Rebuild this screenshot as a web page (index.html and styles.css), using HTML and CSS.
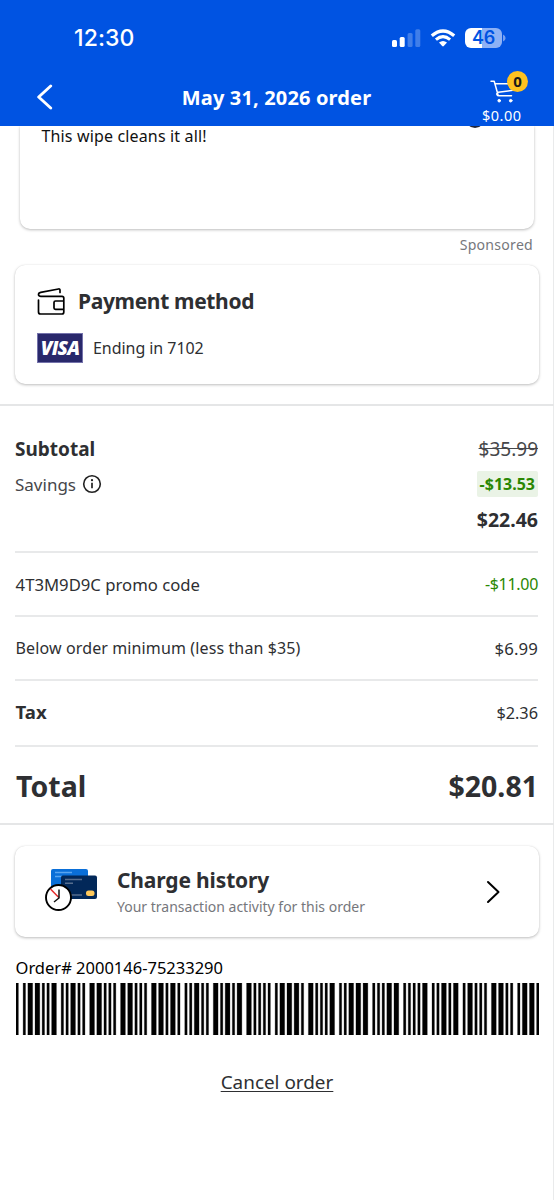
FILE: index.html
```html
<!DOCTYPE html>
<html lang="en">
<head>
<meta charset="utf-8">
<title>May 31, 2026 order</title>
<link rel="stylesheet" href="styles.css">
</head>
<body>
<div class="screen">
  <header class="header">
    <div class="status">
      <span class="clock">12:30</span>
      <div class="status-icons">
        <svg class="signal" width="29" height="18" viewBox="0 0 29 18" fill="#fff"><rect x="0" y="11" width="5" height="7" rx="1.5"/><rect x="7.7" y="8" width="5" height="10" rx="1.5"/><rect x="15.6" y="4" width="5" height="14" rx="1.5" opacity=".25"/><rect x="23.3" y="0.2" width="5" height="17.8" rx="1.5" opacity=".25"/></svg>
        <svg class="wifi" width="26" height="18" viewBox="0 0 26 18"><path d="M1.800 6.700Q13-2.700 24.200 6.700" fill="none" stroke="#fff" stroke-width="3.300"/><path d="M5.900 10.600Q13 4.700 20.100 10.600" fill="none" stroke="#fff" stroke-width="3.100"/><path d="M9 13.600Q13 10.400 17 13.600L13.800 17Q13 17.800 12.200 17Z" fill="#fff"/></svg>
        <div class="battery"><span>46</span></div>
        <svg class="battery-tip" width="3" height="8" viewBox="0 0 3 8"><path d="M0 .5Q2.600 1.500 2.600 4Q2.600 6.500 0 7.500Z" fill="#76a0f1"/></svg>
      </div>
    </div>
    <div class="nav">
      <svg class="back" width="18" height="26" viewBox="0 0 18 26"><path d="M14.700 2L2.700 13L14.700 24" fill="none" stroke="#fff" stroke-width="2.900" stroke-linecap="round" stroke-linejoin="round"/></svg>
      <h1 class="title">May 31, 2026 order</h1>
      <div class="cart">
        <svg width="30" height="24" viewBox="0 0 30 24" fill="none" stroke="#fff" stroke-width="1.500" stroke-linecap="round" stroke-linejoin="round"><path d="M1 1.300H4.200L8 14.700M5 3.800H24L22.700 10.300L8.300 12.300Q6.300 13 7 14.700Q7.400 15.800 9 15.800H21.500"/><circle cx="9.200" cy="20.700" r="1.300" fill="#fff" stroke-width="1"/><circle cx="20.700" cy="20.700" r="1.300" fill="#fff" stroke-width="1"/></svg>
        <span class="badge">0</span>
        <span class="cart-total">$0.00</span>
      </div>
    </div>
  </header>

  <main class="content">
    <section class="card ad"><span class="ad-mark"></span><p>This wipe cleans it all!</p></section>
    <div class="sponsored"><span>Sponsored</span></div>
    <section class="card payment">
      <div class="payment-head">
        <svg width="29" height="29" viewBox="0 0 29 29" fill="none" stroke="#000" stroke-width="1.700" stroke-linejoin="round" stroke-linecap="round"><path d="M1.500 13V25Q1.500 27 3.500 27H25Q26.800 27 26.800 25V11Q26.800 9.300 25 9.300H4Q1.500 9.300 1.500 7.600Q1.500 5.800 3.700 5.300L21.500 2Q23 1.700 23 3.200V5.500M26.800 14H18.500Q17 14 17 15.500V21Q17 22.300 18.500 22.300H26.800"/></svg>
        <h2><span>Payment method</span></h2>
      </div>
      <div class="payment-row"><b class="visa"><span>VISA</span></b><span class="ending">Ending in 7102</span></div>
    </section>

    <section class="summary">
      <div class="group subtotal">
        <div class="row"><strong class="sub-label">Subtotal</strong><s>$35.99</s></div>
        <div class="row"><span class="savings"><span class="savings-label">Savings</span><svg width="20" height="20" viewBox="0 0 20 20"><circle cx="10" cy="10" r="8.300" fill="none" stroke="#222" stroke-width="1.600"/><circle cx="10" cy="6.200" r="1.150" fill="#222"/><path d="M10 8.800V14.300" fill="none" stroke="#222" stroke-width="1.700"/></svg></span><strong class="discount">-$13.53</strong></div>
        <div class="row"><span></span><strong class="net">$22.46</strong></div>
      </div>
      <div class="group line promo"><span>4T3M9D9C promo code</span><span class="green">-$11.00</span></div>
      <div class="group line minimum"><span>Below order minimum (less than $35)</span><span class="fee">$6.99</span></div>
      <div class="group line tax"><strong>Tax</strong><span class="tax-amount">$2.36</span></div>
      <div class="total"><strong class="total-label">Total</strong><strong class="total-amount">$20.81</strong></div>
    </section>

    <section class="card charge">
      <svg class="charge-icon" width="54" height="44" viewBox="0 0 54 44"><rect x="6" y="1" width="37" height="23" rx="2" fill="#0a6fd8"/><path d="M10 4.500H27M10 8.500H17" stroke="#59a5f0" stroke-width="1.500"/><rect x="16" y="7.500" width="36" height="23.500" rx="2" fill="#022859"/><path d="M20 11.500H37M20 15.300H28M25 27H37" stroke="#576e8e" stroke-width="1.500"/><rect x="41" y="22.500" width="8.500" height="5.500" rx="2.500" fill="#ffc95c"/><circle cx="13.500" cy="29.500" r="12.500" fill="#fff" stroke="#000" stroke-width="1.900"/><path d="M5.500 21L13.800 29.500" stroke="#e32c2c" stroke-width="1.500"/><path d="M14 21.500V30L9 34" fill="none" stroke="#111" stroke-width="1.500"/></svg>
      <div class="charge-text"><h2><span>Charge history</span></h2><p>Your transaction activity for this order</p></div>
      <svg class="chevron" width="16" height="26" viewBox="0 0 16 26"><path d="M3 3L13.500 13L3 23" fill="none" stroke="#000" stroke-width="2" stroke-linecap="round" stroke-linejoin="round"/></svg>
    </section>
    <p class="order-number"><span>Order# 2000146-75233290</span></p>
    <svg class="barcode" viewBox="0 0 220 52" preserveAspectRatio="none" aria-label="Order barcode"><path id="bars" fill="#000" stroke="#000" stroke-width=".16"/></svg>
    <div class="cancel"><a>Cancel order</a></div>
  </main>
</div>
<script src="barcode.js"></script>
</body>
</html>
```
FILE: styles.css
```css
* { box-sizing: border-box; }
body { margin: 0; background: #fff; font-family: "Noto Sans", sans-serif; color: #2e2f32; }
h1, h2, p { margin: 0; }
.screen { width: 554px; height: 1200px; overflow: hidden; display: flex; flex-direction: column; }
.header { height: 126px; flex: none; background: #0053e2; color: #fff; position: relative; z-index: 2; }
.status { height: 75px; padding: 0 48px 0 74px; display: flex; align-items: center; justify-content: space-between; }
.clock { font: 500 23px/28px Inter, sans-serif; letter-spacing: .1px; }
.status-icons { display: flex; align-items: center; }
.wifi { margin-left: 9px; }
.battery { width: 37px; height: 20px; margin-left: 9px; border-radius: 6px; background: linear-gradient(90deg, #fff 46%, #8db1f5 46%); color: #0053e2; display: flex; justify-content: center; align-items: center; font: 600 18px/20px Inter, sans-serif; letter-spacing: -.3px; }
.battery-tip { margin-left: 1px; }
.nav { height: 51px; display: flex; padding: 0 28px 0 36px; align-items: flex-start; justify-content: space-between; }
.back { margin-top: 9px; }
.title { font-size: 20px; line-height: 28px; margin: 9px 0 0 21px; letter-spacing: .15px; white-space: nowrap; }
.cart { position: relative; width: 48px; height: 50px; padding: 5px 0 0 12px; }
.cart svg { display: block; }
.badge { position: absolute; left: 29px; top: -4px; width: 21px; height: 21px; border-radius: 50%; background: #ffc220; color: #1b1b1b; font-size: 15px; font-weight: 700; line-height: 21px; text-align: center; }
.cart-total { display: block; margin-left: -8px; font-size: 14.5px; line-height: 22px; letter-spacing: .5px; }
.content { flex: 1; padding: 0 15px; box-shadow: inset -1px 0 #e9eaeb; display: flex; flex-direction: column; }
.card { background: #fff; border-radius: 10px; box-shadow: 0 1px 3px rgba(0,0,0,.26), 0 0 1px rgba(0,0,0,.1); flex: none; }
.ad { position: relative; height: 103px; margin: 0 5px; border-radius: 0 0 10px 10px; color: #111; font-size: 16px; line-height: 21px; padding-left: 21.5px; letter-spacing: .15px; }
.ad-mark { position: absolute; left: 445px; top: -18px; width: 20px; height: 20px; border-radius: 50%; background: #20263c; }
.sponsored { height: 36px; flex: none; text-align: right; padding-right: 6px; color: #76777c; font-size: 14.1px; line-height: 31px; letter-spacing: .25px; }
.payment { height: 119px; padding: 22px; }
.payment-head { height: 29px; display: flex; gap: 12px; align-items: center; }
.payment-head h2 { margin-bottom: 1px; letter-spacing: -.35px; }
h2 { font-size: 21px; line-height: 28px; letter-spacing: -.15px; white-space: nowrap; }
.payment-row { display: flex; align-items: center; height: 30px; margin-top: 17px; gap: 10px; font-size: 16px; }
.ending { letter-spacing: -.05px; }
.visa { width: 46px; height: 30px; border: 1px solid #7472ab; background: #29286b; color: #fff; font: italic 800 19px/28px "Open Sans", sans-serif; letter-spacing: -.8px; text-align: center; }
.summary { margin: 20px -15px 0; padding: 0 16px 0 15px; border-top: 2px solid #e5e6e7; border-bottom: 2px solid #e5e6e7; font-size: 16px; height: 421px; flex: none; }
.group { border-bottom: 2px solid #e8e9ea; }
.subtotal { height: 147px; padding-top: 25px; }
.row { height: 35.5px; display: flex; align-items: center; justify-content: space-between; }
.sub-label { font-size: 19px; }
s { font-size: 19px; color: #46474a; }
.net { font-size: 19.5px; }
.savings { display: flex; align-items: center; gap: 6px; color: #46474a; font-size: 17px; }
.discount { background: #eaf3e6; color: #2a8703; padding: 0 3px 0 3px; line-height: 26px; border-radius: 2px; }
.line { display: flex; align-items: center; justify-content: space-between; }
.line > :first-child { padding-left: .6px; }
.promo { height: 64px; font-size: 16.7px; }
.promo .green { font-size: 16px; letter-spacing: -.3px; }
.minimum { height: 64px; letter-spacing: .12px; }
.fee { font-size: 16.8px; }
.tax { height: 66px; }
.tax strong { font-size: 18.6px; line-height: 24px; margin-top: -2px; }
.tax-amount { font-size: 16.3px; }
.green { color: #2a8703; }
.total { height: 77px; padding-left: 1px; display: flex; justify-content: space-between; align-items: center; font-size: 28.5px; }
.charge { height: 91px; margin-top: 21px; padding: 0 38px 0 30px; display: flex; align-items: center; }
.charge-icon { margin-bottom: 3px; }
.charge-text { margin-left: 18px; flex: 1; }
.charge-text p { color: #76777c; font-size: 14px; line-height: 20px; margin-top: 3px; }
.order-number { color: #000; font-size: 16.5px; line-height: 24px; margin-top: 19px; padding-left: .5px; }
.barcode { width: 523px; height: 52px; margin: 3px 0 0 .5px; flex: none; }
.cancel { margin-top: 34px; text-align: center; font-size: 18.9px; line-height: 26px; }
.cancel a { text-decoration: underline; text-underline-offset: 2px; text-decoration-thickness: 1px; }
```
FILE: barcode.js
```js
// Code 39 patterns: alternating bars and spaces, 1 = wide, 0 = narrow.
const patterns = {
  "0": "000110100", "1": "100100001", "2": "001100001", "3": "101100000",
  "4": "000110001", "5": "100110000", "6": "001110000", "7": "000100101",
  "8": "100100100", "9": "001100100", "*": "010010100"
};
let x = 0;
let d = "";
for (const ch of "*200014675233290*") {
  [...patterns[ch]].forEach((bit, i) => {
    const w = bit === "1" ? 2 : 1;
    if (i % 2 === 0) d += `M${x} 0h${w}v52h-${w}z`;
    x += w;
  });
  x += 1;
}
document.getElementById("bars").setAttribute("d", d);
```
